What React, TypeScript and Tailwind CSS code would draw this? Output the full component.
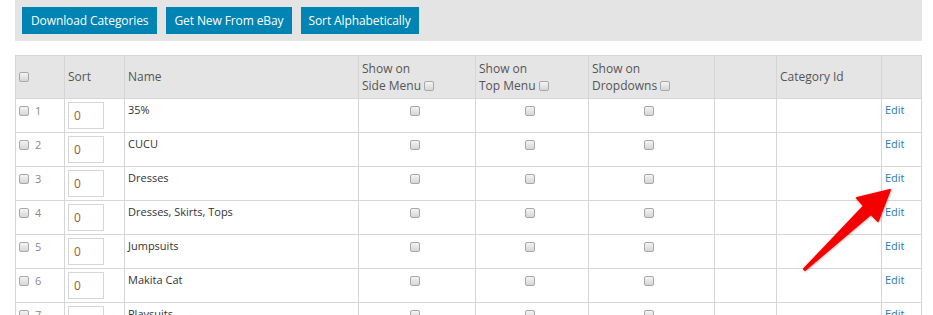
import React from "react";

const Box = ({ className = "" }: { className?: string }) => (
  <span
    className={
      "inline-block w-[10px] h-[10px] rounded-[2px] border border-[#a8a8a8] bg-linear-to-b from-[#f4f4f4] to-[#d6d6d6] align-middle " +
      className
    }
  />
);

const rows = ["35%", "CUCU", "Dresses", "Dresses, Skirts, Tops", "Jumpsuits", "Makita Cat", "Playsuits", "Rompers"];

const buttons = [
  { t: "Download Categories", c: "px-[9px]" },
  { t: "Get New From eBay", c: "px-[8px]" },
  { t: "Sort Alphabetically", c: "px-[8px]" },
];

export default function App() {
  return (
    <div className="relative h-[315px] w-[933px] overflow-hidden bg-white font-['Open_Sans',sans-serif]">
      <div className="ml-[15px] w-[907px] h-[41px] bg-[#e4e4e4] pl-[7px] pt-[7px] flex gap-[9px]">
        {buttons.map((b) => (
          <div
            key={b.t}
            className={
              "h-[27px] bg-[#0084b4] text-white text-[12px] tracking-[-0.1px] leading-[27px] whitespace-nowrap " + b.c
            }
          >
            {b.t}
          </div>
        ))}
      </div>

      <div className="ml-[15px] mt-[14px] w-[907px] grid grid-cols-[48px_59px_233px_116px_112px_125px_61px_104px_39px] gap-px bg-[#d6d6d6] border border-[#d6d6d6]">
        {/* header */}
        <div className="h-[42px] bg-[#e5e5e5] flex items-center pl-[3px]">
          <Box />
        </div>
        <div className="h-[42px] bg-[#e5e5e5] flex items-center px-[3px] text-[12px] text-[#555]">Sort</div>
        <div className="h-[42px] bg-[#e5e5e5] flex items-center px-[3px] text-[12px] text-[#555]">Name</div>
        {["Side Menu", "Top Menu", "Dropdowns"].map((t) => (
          <div key={t} className="h-[42px] bg-[#e5e5e5] flex items-center px-[3px] text-[12px] leading-[17px] text-[#555]">
            <div>
              <div>Show on</div>
              <div className="flex items-center gap-[3px]">
                {t}
                <Box className="w-[9px] h-[9px]" />
              </div>
            </div>
          </div>
        ))}
        <div className="h-[42px] bg-[#e5e5e5]" />
        <div className="h-[42px] bg-[#e5e5e5] flex items-center px-[3px] text-[12px] text-[#555]">Category Id</div>
        <div className="h-[42px] bg-[#e5e5e5]" />

        {rows.map((name, i) => (
          <React.Fragment key={i}>
            <div className="h-[33px] bg-white pl-[3px] pt-[7px] flex items-start gap-[6px] text-[11px] leading-[11px] text-[#888]">
              <Box />
              <span className="mt-[-1px]">{i + 1}</span>
            </div>
            <div className="h-[33px] bg-white pl-[3px] pt-[3px]">
              <div className="w-[36px] h-[27px] border border-[#d6d6d6] pl-[5px] text-[12px] leading-[25px] text-[#9a5b2e]">
                0
              </div>
            </div>
            <div className="h-[33px] bg-white px-[3px] pt-[3px] text-[11px] leading-[15px] text-[#333]">{name}</div>
            <div className="h-[33px] bg-white pt-[7px] pr-[5px] flex justify-center items-start">
              <Box />
            </div>
            <div className="h-[33px] bg-white pt-[7px] pr-[5px] flex justify-center items-start">
              <Box />
            </div>
            <div className="h-[33px] bg-white pt-[7px] pr-[5px] flex justify-center items-start">
              <Box />
            </div>
            <div className="h-[33px] bg-white" />
            <div className="h-[33px] bg-white" />
            <div className="h-[33px] bg-white px-[3px] pt-[3px] text-[11px] leading-[15px] text-[#2b7bb9]">Edit</div>
          </React.Fragment>
        ))}
      </div>

      <svg className="absolute left-0 top-0 pointer-events-none" width="933" height="315" viewBox="0 0 933 315">
        <defs>
          <filter id="sh" x="-20%" y="-20%" width="140%" height="140%">
            <feDropShadow dx="0.5" dy="0.5" stdDeviation="0.8" floodColor="#000" floodOpacity="0.35" />
          </filter>
        </defs>
        <polygon
          points="804,269 864,206 857,198 890,190 878,221 871,214 805,270"
          fill="#f50000"
          stroke="#f50000"
          strokeWidth="2"
          strokeLinejoin="round"
          filter="url(#sh)"
        />
      </svg>
    </div>
  );
}
